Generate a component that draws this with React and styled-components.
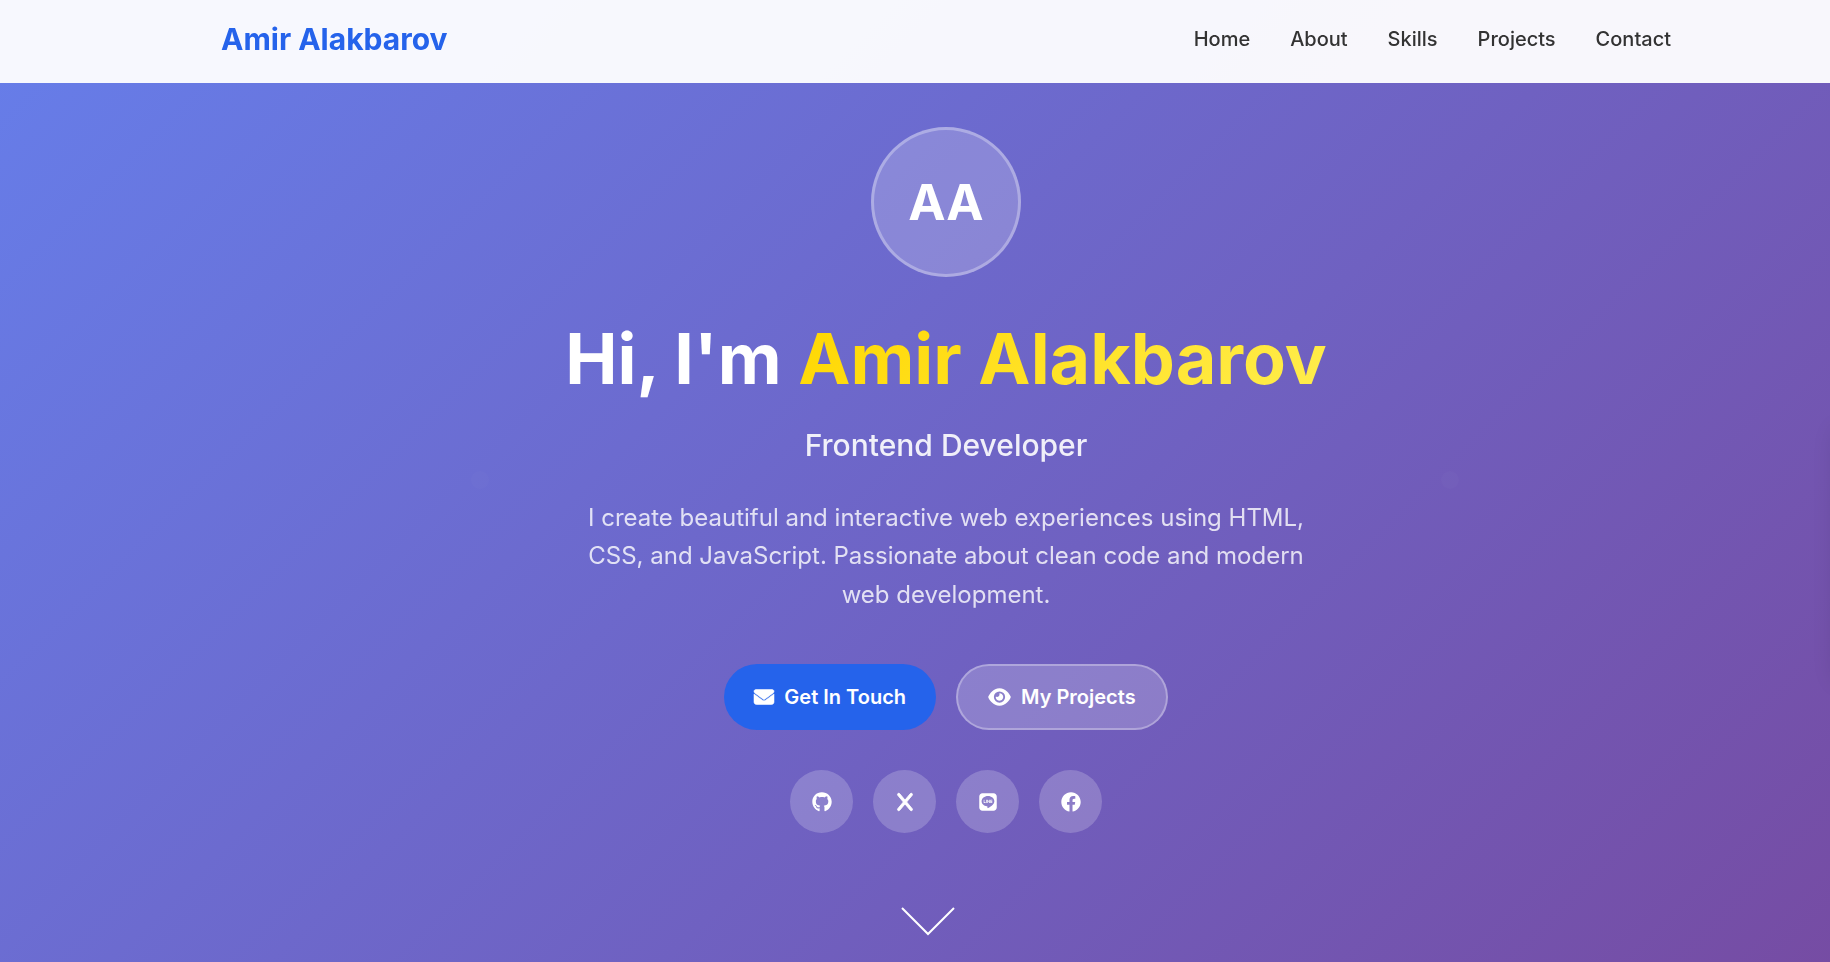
import React from 'react';
import styled, { createGlobalStyle, css } from 'styled-components';
import { FaEnvelope, FaEye, FaX } from 'react-icons/fa6';
import { FaGithub, FaLine, FaFacebook } from 'react-icons/fa';

const GlobalStyle = createGlobalStyle`
  *, *::before, *::after { box-sizing: border-box; }
  html { font-size: 20px; }
  body {
    margin: 0;
    font-family: Inter, "Liberation Sans", sans-serif;
    line-height: 1.6;
    color: #333;
    overflow-x: hidden;
  }
  h1, h2, p, ul { margin: 0; padding: 0; }
  a { text-decoration: none; }
`;

const Page = styled.div`
  width: calc(100% + 62px);
`;

const Header = styled.header`
  position: fixed;
  top: 0;
  left: 0;
  z-index: 10;
  width: calc(100% + 62px);
  background: rgba(255, 255, 255, 0.95);
`;

const NavBar = styled.nav`
  display: flex;
  justify-content: space-between;
  align-items: center;
  max-width: 1500px;
  height: 83px;
  margin: 0 auto;
  padding: 0 25px 5px;
`;

const Brand = styled.a`
  font-size: 30px;
  font-weight: 700;
  color: #2563eb;
`;

const NavList = styled.ul`
  display: flex;
  gap: 40px;
  list-style: none;
`;

const NavLink = styled.a`
  font-weight: 500;
  color: #333;
`;

const Hero = styled.section`
  position: relative;
  display: flex;
  flex-direction: column;
  align-items: center;
  justify-content: center;
  min-height: 100vh;
  padding-bottom: 2px;
  overflow: hidden;
  text-align: center;
  color: #fff;
  background: linear-gradient(135deg, #667eea 0%, #764ba2 100%);
`;

const Speck = styled.span`
  position: absolute;
  top: 471px;
  left: ${(p) => p.$left};
  width: 18px;
  height: 18px;
  border-radius: 50%;
  background: rgba(255, 255, 255, 0.02);
`;

const EdgePanel = styled.div`
  position: absolute;
  top: 430px;
  right: 0;
  width: 56px;
  height: 250px;
  box-shadow: 0 0 25px rgba(0, 0, 0, 0.12);
`;

const Avatar = styled.div`
  display: flex;
  align-items: center;
  justify-content: center;
  width: 150px;
  height: 150px;
  margin-bottom: 40px;
  border: 3px solid rgba(255, 255, 255, 0.3);
  border-radius: 50%;
  background: rgba(255, 255, 255, 0.2);
  font-size: 50px;
  font-weight: 700;
`;

const Title = styled.h1`
  margin-bottom: 20px;
  font-size: 70px;
  font-weight: 700;
  line-height: 84px;
`;

const Highlight = styled.span`
  color: transparent;
  background: linear-gradient(135deg, #ffd700, #ffed4e);
  background-clip: text;
  -webkit-background-clip: text;
`;

const Subtitle = styled.h2`
  margin-bottom: 30px;
  font-size: 30px;
  font-weight: 500;
  line-height: 48px;
  opacity: 0.9;
`;

const Description = styled.p`
  max-width: 750px;
  margin-bottom: 50px;
  font-size: 24px;
  opacity: 0.8;
`;

const Actions = styled.div`
  display: flex;
  gap: 20px;
  margin-bottom: 40px;
`;

const ActionLink = styled.a`
  display: inline-flex;
  align-items: center;
  gap: 10px;
  height: 66px;
  padding: 0 30px;
  border-radius: 33px;
  font-weight: 600;
  color: #fff;
  background: #2563eb;

  svg {
    width: 20px;
    height: 20px;
  }

  ${(p) =>
    p.$outlined &&
    css`
      background: rgba(255, 255, 255, 0.2);
      border: 2px solid rgba(255, 255, 255, 0.3);

      svg {
        width: 23px;
      }
    `}
`;

const EnvelopeIcon = styled(FaEnvelope)`
  overflow: visible;

  path {
    stroke: currentColor;
    stroke-width: 14px;
  }
`;

const CrossIcon = styled(FaX)`
  overflow: visible;

  path {
    stroke: currentColor;
    stroke-width: 22px;
  }
`;

const SocialLinks = styled.div`
  display: flex;
  gap: 20px;
`;

const SocialLink = styled.a`
  display: flex;
  align-items: center;
  justify-content: center;
  width: 63px;
  height: 63px;
  border-radius: 50%;
  color: #fff;
  background: rgba(255, 255, 255, 0.2);
`;

const ScrollCue = styled.a`
  position: absolute;
  bottom: 26px;
  left: calc(50% - 45px);
  height: 30px;
`;

const NAV = ['Home', 'About', 'Skills', 'Projects', 'Contact'];
const SOCIALS = [
  { name: 'GitHub', Icon: FaGithub },
  { name: 'X', Icon: CrossIcon },
  { name: 'LINE', Icon: FaLine },
  { name: 'Facebook', Icon: FaFacebook },
];

export default function App() {
  return (
    <Page>
      <GlobalStyle />
      <Header>
        <NavBar>
          <Brand href="#home">Amir Alakbarov</Brand>
          <NavList>
            {NAV.map((label) => (
              <li key={label}>
                <NavLink href={`#${label.toLowerCase()}`}>{label}</NavLink>
              </li>
            ))}
          </NavList>
        </NavBar>
      </Header>
      <Hero id="home">
        <Speck $left="calc(25% - 2px)" />
        <Speck $left="calc(75% + 22px)" />
        <Avatar>AA</Avatar>
        <Title>
          Hi, I'm <Highlight>Amir Alakbarov</Highlight>
        </Title>
        <Subtitle>Frontend Developer</Subtitle>
        <Description>
          I create beautiful and interactive web experiences using HTML, CSS, and JavaScript.
          Passionate about clean code and modern web development.
        </Description>
        <Actions>
          <ActionLink href="#contact">
            <EnvelopeIcon aria-hidden="true" />
            Get In Touch
          </ActionLink>
          <ActionLink href="#projects" $outlined>
            <FaEye aria-hidden="true" />
            My Projects
          </ActionLink>
        </Actions>
        <SocialLinks>
          {SOCIALS.map(({ name, Icon }) => (
            <SocialLink key={name} href={`#${name.toLowerCase()}`} aria-label={name}>
              <Icon aria-hidden="true" />
            </SocialLink>
          ))}
        </SocialLinks>
        <ScrollCue href="#about" aria-label="Scroll down">
          <svg width="54" height="30" viewBox="0 0 54 30" fill="none" stroke="#fff" strokeWidth="2">
            <path d="M1 2L27 28L53 2" />
          </svg>
        </ScrollCue>
        <EdgePanel />
      </Hero>
    </Page>
  );
}
